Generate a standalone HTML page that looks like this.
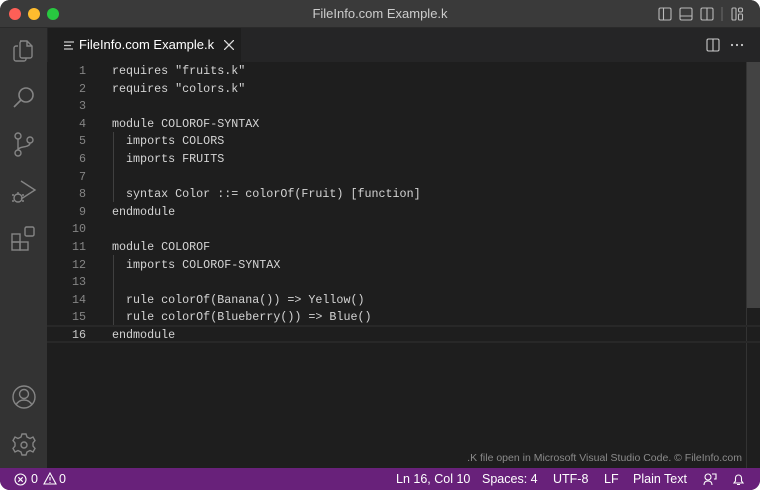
<!DOCTYPE html>
<html><head><meta charset="utf-8"><style>
*{margin:0;padding:0;box-sizing:border-box}
html,body{width:760px;height:490px;background:#fff;overflow:hidden}
.win{position:absolute;left:0;top:0;width:760px;height:490px;border-radius:10px;overflow:hidden;background:#1e1e1e;font-family:"Liberation Sans",sans-serif}
.title{position:absolute;left:0;top:0;width:760px;height:28px;background:#3a3a3a;border-bottom:1px solid #2a2a2a}
.title .t{position:absolute;left:0;right:0;top:6px;text-align:center;color:#cccccc;font-size:13px}
.dot{position:absolute;top:8px;width:12px;height:12px;border-radius:50%}
.act{position:absolute;left:0;top:28px;width:47px;height:440px;background:#333333}
.tabs{position:absolute;left:47px;top:28px;width:713px;height:34px;background:#252526}
.tab{position:absolute;left:1px;top:0;width:193px;height:34px;background:#1e1e1e;color:#fff;font-size:13px}
.code{position:absolute;left:47px;top:63px;width:699px;font-family:"Liberation Mono",monospace;font-size:11.7px}
.ln{position:absolute;left:0;width:39px;text-align:right;color:#858585}
.tx{position:absolute;left:65px;color:#d4d4d4;white-space:pre}
.status{position:absolute;left:0;top:468px;width:760px;height:22px;background:#68217a;color:#fff;font-size:12.5px}
.status span{position:absolute;top:4px}
svg{position:absolute}
</style></head><body><div class="win">
<div class="title"><div class="dot" style="left:9px;background:#fe5f57"></div><div class="dot" style="left:28px;background:#febc2e"></div><div class="dot" style="left:47px;background:#28c840"></div>
<div class="t">FileInfo.com Example.k</div>
<svg style="left:658px;top:7px" width="100" height="14" fill="none" stroke="#bbb" stroke-width="1.1">
<rect x="1" y="1" width="12" height="12" rx="1.5"/><line x1="5.5" y1="1" x2="5.5" y2="13"/>
<rect x="22" y="1" width="12" height="12" rx="1.5"/><line x1="22" y1="9" x2="34" y2="9"/>
<rect x="43" y="1" width="12" height="12" rx="1.5"/><line x1="49" y1="1" x2="49" y2="13"/>
<line x1="64" y1="-1" x2="64" y2="15" stroke="#666"/>
<rect x="74" y="1" width="4" height="12" rx="1"/><rect x="80.5" y="1" width="4" height="4" rx="1.5"/><rect x="80.5" y="7" width="4" height="6" rx="1"/>
</svg></div>
<div class="act">
<svg style="left:11px;top:10px" width="26" height="26" fill="none" stroke="#858585" stroke-width="1.4"><path d="M9 3h7l5 5v10a2 2 0 0 1-2 2h-8a2 2 0 0 1-2-2V5a2 2 0 0 1 2-2zM16 3v5h5"/><path d="M7 8H5a2 2 0 0 0-2 2v11a2 2 0 0 0 2 2h8a2 2 0 0 0 2-2v-1"/></svg>
<svg style="left:11px;top:57px" width="26" height="26" fill="none" stroke="#858585" stroke-width="1.6"><circle cx="15" cy="10" r="7"/><line x1="10" y1="15" x2="3" y2="22"/></svg>
<svg style="left:11px;top:103px" width="26" height="28" fill="none" stroke="#858585" stroke-width="1.4"><circle cx="7" cy="5" r="3"/><circle cx="7" cy="22" r="3"/><circle cx="19" cy="9" r="3"/><line x1="7" y1="8" x2="7" y2="19"/><path d="M19 12c0 5-12 3-12 7"/></svg>
<svg style="left:10px;top:150px" width="28" height="28" fill="none" stroke="#858585" stroke-width="1.4"><path d="M11 3l14 9-14 9"/><circle cx="8" cy="20" r="4"/><path d="M2 17h2M2 23h2M12 17h2M12 23h2M8 14v2"/></svg>
<svg style="left:10px;top:197px" width="28" height="28" fill="none" stroke="#858585" stroke-width="1.4"><rect x="2" y="9" width="8" height="8"/><rect x="2" y="17" width="8" height="8"/><rect x="10" y="17" width="8" height="8"/><rect x="15" y="2" width="9" height="9" rx="1.5"/></svg>
<svg style="left:10px;top:355px" width="28" height="28" fill="none" stroke="#858585" stroke-width="1.4"><circle cx="14" cy="14" r="11"/><circle cx="14" cy="11" r="4.5"/><path d="M6 22c2-4 5-5 8-5s6 1 8 5"/></svg>
<svg style="left:10px;top:403px" width="28" height="28" fill="none" stroke="#858585" stroke-width="1.4"><circle cx="14" cy="14" r="3"/><path d="M12 3h4l1 3 3 1.5 3-1.5 2 3.5-2 2.5v3l2 2.5-2 3.5-3-1.5-3 1.5-1 3h-4l-1-3-3-1.5-3 1.5-2-3.5 2-2.5v-3l-2-2.5 2-3.5 3 1.5 3-1.5z"/></svg>
</div>
<div class="tabs"><div class="tab">
<svg style="left:16px;top:13px" width="10" height="9" stroke="#ccc" stroke-width="1.3"><line x1="0" y1="1" x2="10" y2="1"/><line x1="0" y1="4.5" x2="7" y2="4.5"/><line x1="0" y1="8" x2="9" y2="8"/></svg>
<span style="position:absolute;left:31px;top:9px">FileInfo.com Example.k</span>
<svg style="left:176px;top:12px" width="10" height="10" stroke="#ddd" stroke-width="1.3"><line x1="0" y1="0" x2="10" y2="10"/><line x1="10" y1="0" x2="0" y2="10"/></svg>
</div>
<svg style="left:659px;top:10px" width="14" height="14" fill="none" stroke="#ccc" stroke-width="1.1"><rect x="1" y="1" width="12" height="12" rx="1.5"/><line x1="7" y1="1" x2="7" y2="13"/></svg>
<svg style="left:683px;top:15px" width="16" height="4" fill="#ccc"><circle cx="2" cy="2" r="1.1"/><circle cx="7" cy="2" r="1.1"/><circle cx="12" cy="2" r="1.1"/></svg>
</div>
<div style="position:absolute;left:746px;top:62px;width:14px;height:246px;background:#434343"></div>
<div style="position:absolute;left:746px;top:62px;width:1px;height:406px;background:#333"></div>
<div style="position:absolute;left:47px;top:325px;width:713px;height:18px;border-top:2px solid #282828;border-bottom:2px solid #282828"></div>
<div style="position:absolute;left:113px;top:132px;width:1px;height:70px;background:#404040"></div>
<div style="position:absolute;left:113px;top:255px;width:1px;height:70px;background:#404040"></div>
<div class="code">
<div class="ln" style="top:1px">1</div><div class="tx" style="top:1px">requires "fruits.k"</div>
<div class="ln" style="top:18.6px">2</div><div class="tx" style="top:18.6px">requires "colors.k"</div>
<div class="ln" style="top:36.2px">3</div>
<div class="ln" style="top:53.8px">4</div><div class="tx" style="top:53.8px">module COLOROF-SYNTAX</div>
<div class="ln" style="top:71.4px">5</div><div class="tx" style="top:71.4px">  imports COLORS</div>
<div class="ln" style="top:89px">6</div><div class="tx" style="top:89px">  imports FRUITS</div>
<div class="ln" style="top:106.6px">7</div>
<div class="ln" style="top:124.2px">8</div><div class="tx" style="top:124.2px">  syntax Color ::= colorOf(Fruit) [function]</div>
<div class="ln" style="top:141.8px">9</div><div class="tx" style="top:141.8px">endmodule</div>
<div class="ln" style="top:159.4px">10</div>
<div class="ln" style="top:177px">11</div><div class="tx" style="top:177px">module COLOROF</div>
<div class="ln" style="top:194.6px">12</div><div class="tx" style="top:194.6px">  imports COLOROF-SYNTAX</div>
<div class="ln" style="top:212.2px">13</div>
<div class="ln" style="top:229.8px">14</div><div class="tx" style="top:229.8px">  rule colorOf(Banana()) =&gt; Yellow()</div>
<div class="ln" style="top:247.4px">15</div><div class="tx" style="top:247.4px">  rule colorOf(Blueberry()) =&gt; Blue()</div>
<div class="ln" style="top:265px;color:#c6c6c6">16</div><div class="tx" style="top:265px">endmodule</div>
</div>
<div style="position:absolute;right:18px;top:452px;color:#8a8a8a;font-size:10.5px">.K file open in Microsoft Visual Studio Code. © FileInfo.com</div>
<div class="status">
<svg style="left:14px;top:5px" width="13" height="13" fill="none" stroke="#fff" stroke-width="1.1"><circle cx="6.5" cy="6.5" r="5.5"/><path d="M4.3 4.3l4.4 4.4M8.7 4.3l-4.4 4.4"/></svg>
<span style="left:31px">0</span>
<svg style="left:43px;top:4px" width="14" height="13" fill="none" stroke="#fff" stroke-width="1.1"><path d="M7 1L13 12H1z"/><path d="M7 5v3.5M7 10v1"/></svg>
<span style="left:59px">0</span>
<span style="left:396px">Ln 16, Col 10</span>
<span style="left:482px">Spaces: 4</span>
<span style="left:553px">UTF-8</span>
<span style="left:604px">LF</span>
<span style="left:633px">Plain Text</span>
<svg style="left:703px;top:4px" width="14" height="14" fill="none" stroke="#fff" stroke-width="1.1"><circle cx="5" cy="5" r="3"/><path d="M1 13c0-3 2-4 4-4s4 1 4 4M9 2h4v5h-2"/></svg>
<svg style="left:732px;top:4px" width="13" height="14" fill="none" stroke="#fff" stroke-width="1.1"><path d="M2 11h9l-1.5-2V6a3 3 0 0 0-6 0v3z"/><path d="M5 12.5h3"/></svg>
</div>
</div></body></html>
